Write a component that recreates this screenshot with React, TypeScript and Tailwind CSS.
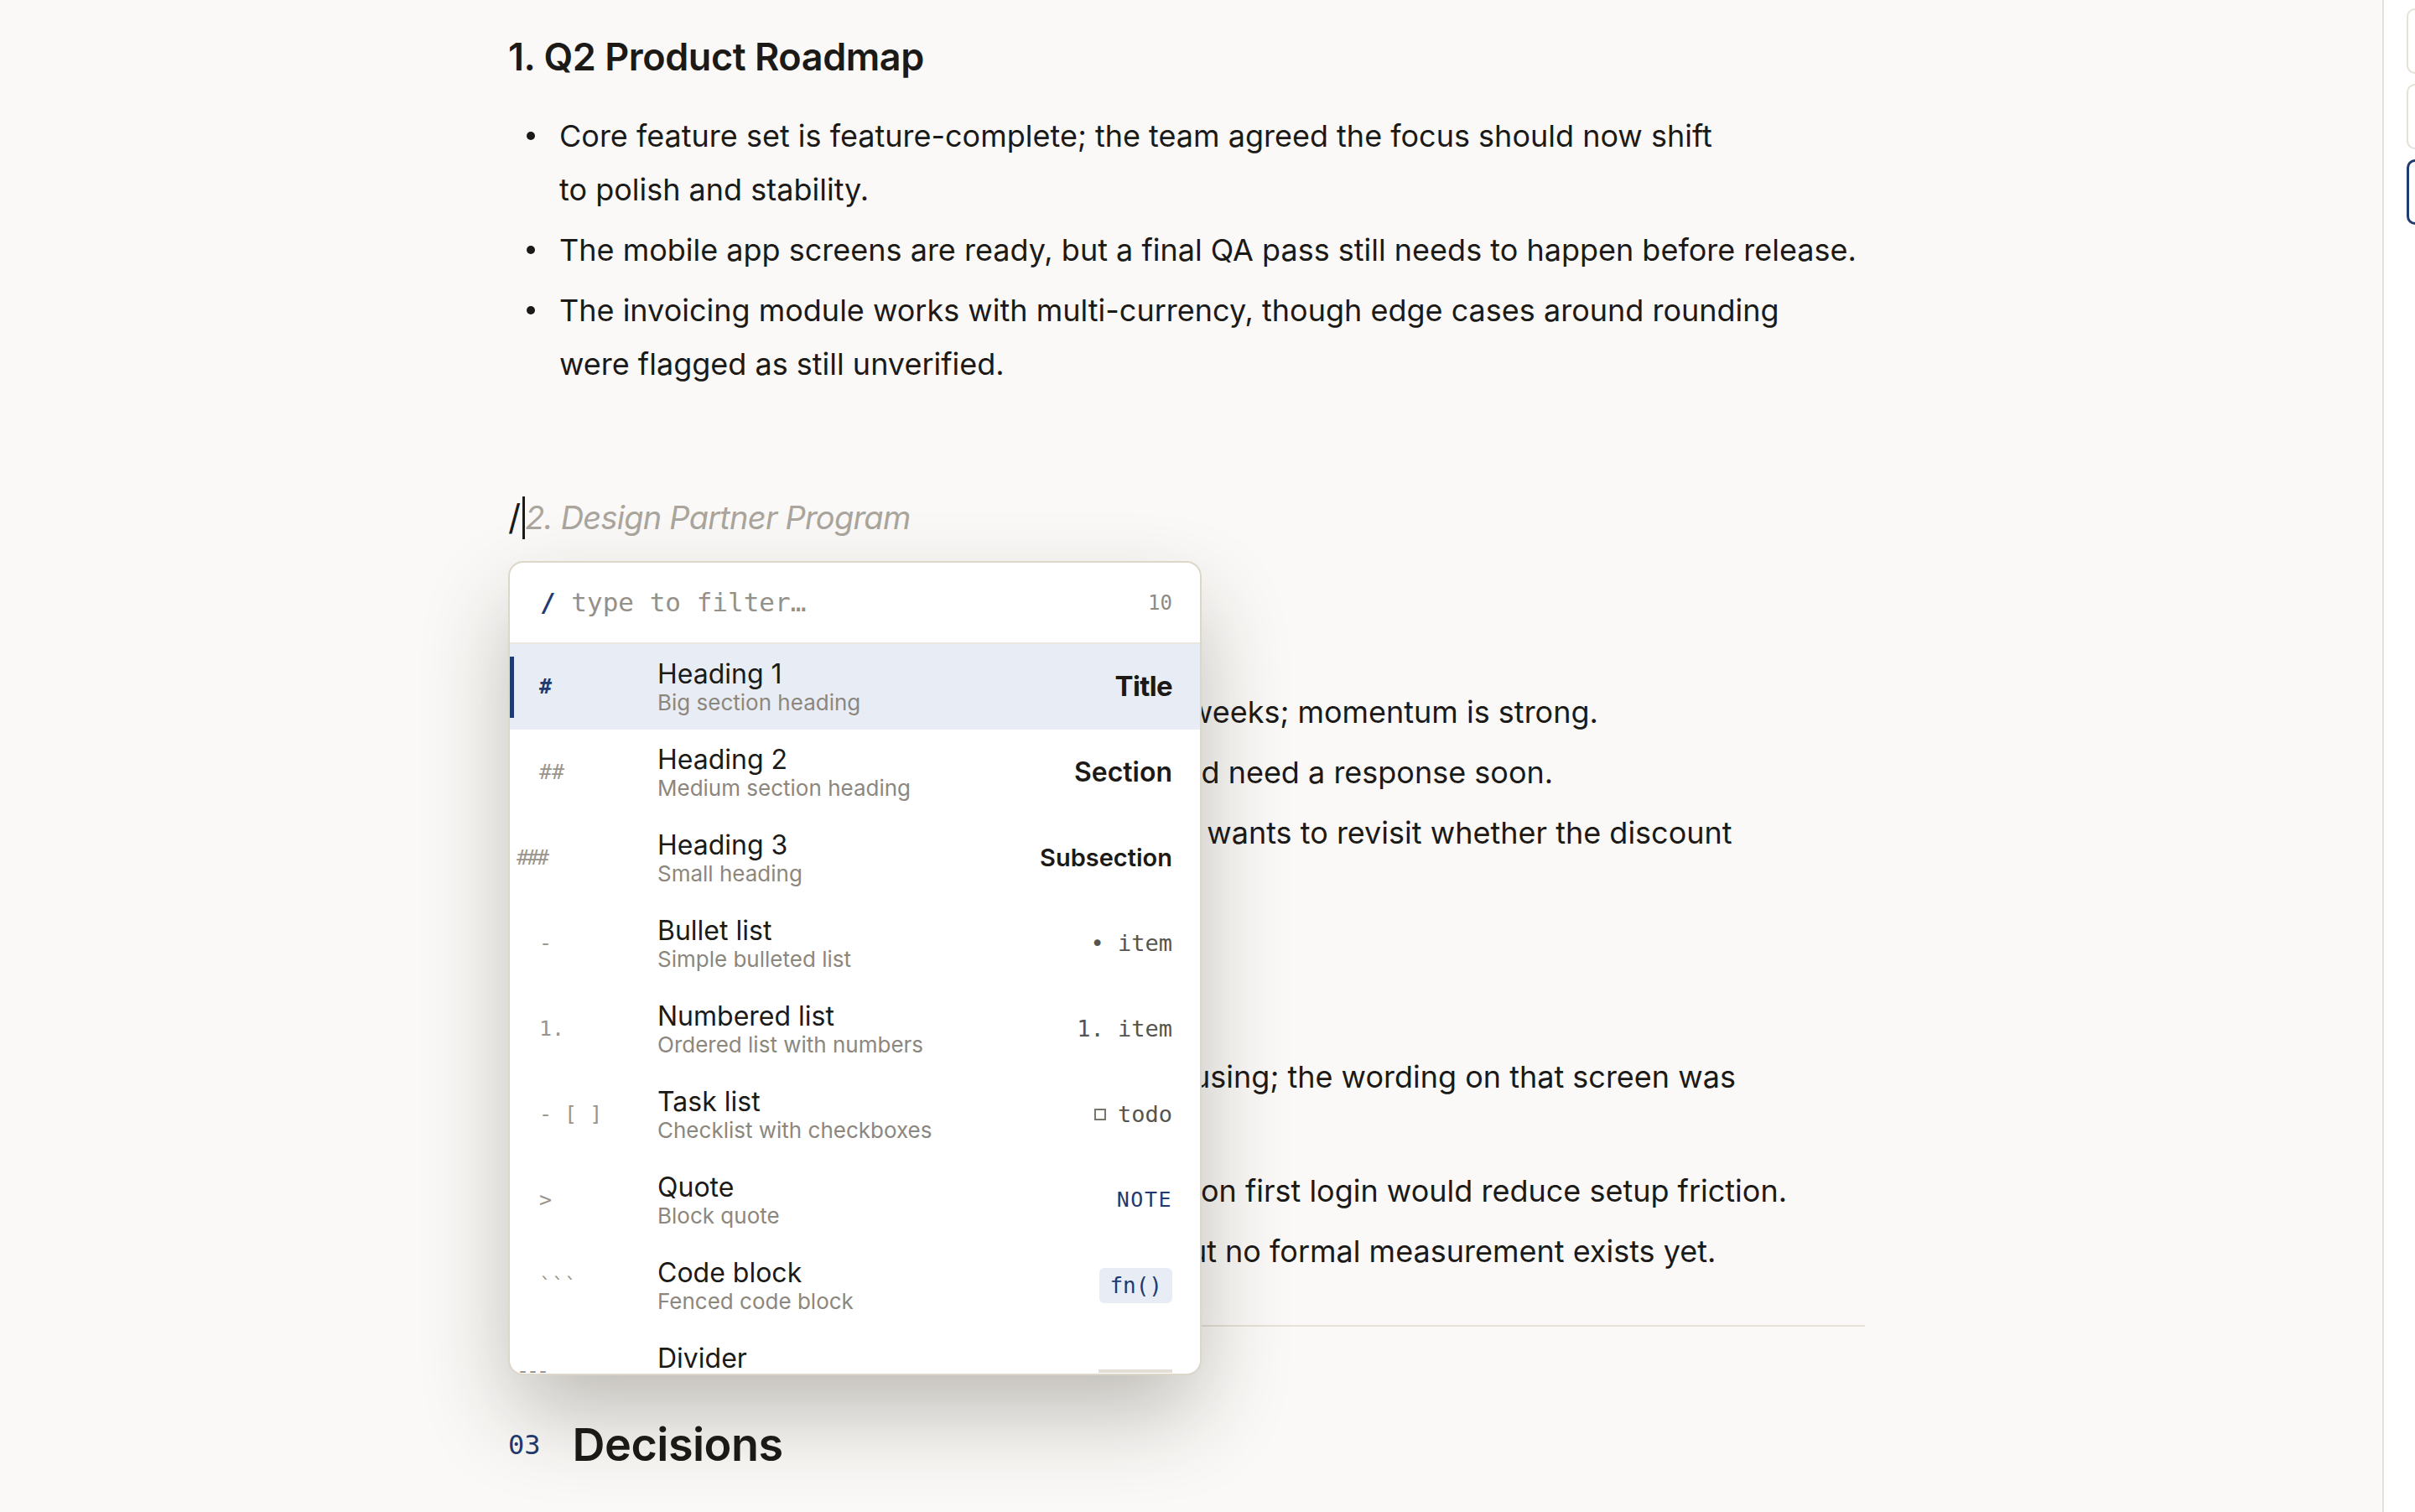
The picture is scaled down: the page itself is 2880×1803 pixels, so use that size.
import type { ReactNode } from 'react'

const mono = "font-['DejaVu_Sans_Mono','Liberation_Mono',monospace]"

type Command = {
  shortcut: string
  shortcutClass?: string
  title: string
  hint: string
  preview: ReactNode
}

const commands: Command[] = [
  {
    shortcut: '#',
    title: 'Heading 1',
    hint: 'Big section heading',
    preview: <span className="text-[33px] font-bold tracking-[-0.02em]">Title</span>,
  },
  {
    shortcut: '##',
    title: 'Heading 2',
    hint: 'Medium section heading',
    preview: <span className="text-[32px] font-semibold">Section</span>,
  },
  {
    shortcut: '###',
    shortcutClass: '-ml-[27px] text-[22px] tracking-[-3px]',
    title: 'Heading 3',
    hint: 'Small heading',
    preview: <span className="text-[29px] font-semibold">Subsection</span>,
  },
  {
    shortcut: '-',
    title: 'Bullet list',
    hint: 'Simple bulleted list',
    preview: <span className={`${mono} text-[27px] text-[#57534e]`}>• item</span>,
  },
  {
    shortcut: '1.',
    title: 'Numbered list',
    hint: 'Ordered list with numbers',
    preview: <span className={`${mono} text-[27px] text-[#57534e]`}>1. item</span>,
  },
  {
    shortcut: '- [ ]',
    title: 'Task list',
    hint: 'Checklist with checkboxes',
    preview: (
      <span className={`${mono} flex items-center gap-[14px] text-[27px] text-[#57534e]`}>
        <span className="h-[14px] w-[14px] border-2 border-[#7a756d]" />
        todo
      </span>
    ),
  },
  {
    shortcut: '>',
    title: 'Quote',
    hint: 'Block quote',
    preview: <span className={`${mono} text-[25px] tracking-[0.06em] text-[#1f3b70]`}>NOTE</span>,
  },
  {
    shortcut: '```',
    title: 'Code block',
    hint: 'Fenced code block',
    preview: (
      <span className={`${mono} inline-block rounded-[6px] bg-[#e8edf5] px-[12px] py-[5px] text-[26px] leading-[32px] text-[#1f3b70]`}>
        fn()
      </span>
    ),
  },
  {
    shortcut: '---',
    shortcutClass: '-ml-[27px] tracking-[-3px]',
    title: 'Divider',
    hint: 'Horizontal rule',
    preview: <span className="block h-[4px] w-[88px] bg-[#e4dfd4]" />,
  },
]

function Bullet({ children }: { children: ReactNode }) {
  return (
    <li className="flex">
      <span className="flex h-[64px] w-[61px] shrink-0 items-center pl-[22px]">
        <span className="h-[10px] w-[10px] rounded-full bg-[#1c1a17]" />
      </span>
      <span>{children}</span>
    </li>
  )
}

function SlashMenu() {
  return (
    <div className="absolute left-0 top-[78px] z-10 flex h-[971px] w-[827px] flex-col overflow-hidden rounded-[18px] border-2 border-[#ddd7ca] bg-white shadow-[0_48px_110px_-8px_rgba(40,32,20,0.3)]">
      <div className="flex h-[97px] shrink-0 items-center justify-between border-b-2 border-[#ebe7de] pl-[36px] pr-[33px]">
        <span className={`${mono} text-[31px] text-[#959088]`}>
          <span className="font-bold text-[#1f3b70]">/</span> type to filter…
        </span>
        <span className={`${mono} text-[24px] text-[#8f8a82]`}>10</span>
      </div>
      <ul className="flex-1 overflow-hidden">
        {commands.map((c, i) => {
          const active = i === 0
          return (
            <li
              key={c.title}
              className={`relative flex h-[102px] items-center pl-[35px] pr-[33px] ${active ? 'bg-[#e8edf5]' : ''}`}
            >
              {active && <span className="absolute bottom-[14px] left-0 top-[15px] w-[5px] bg-[#1f3b70]" />}
              <span className="w-[141px] shrink-0">
                <span
                  className={`${mono} text-[25px] ${active ? 'font-bold text-[#1f3b70]' : 'text-[#9a958c]'} ${c.shortcutClass ?? ''}`}
                >
                  {c.shortcut}
                </span>
              </span>
              <div className="flex min-w-0 flex-1 flex-col">
                <span className="text-[32px] leading-[38px]">{c.title}</span>
                <span className="text-[26px] leading-[30px] text-[#8c877e]">{c.hint}</span>
              </div>
              <div className="shrink-0">{c.preview}</div>
            </li>
          )
        })}
      </ul>
    </div>
  )
}

export default function App() {
  return (
    <div className="flex h-[1803px] w-full overflow-hidden bg-[#faf9f7] font-['Inter','Noto_Sans',sans-serif] text-[#1c1a17]">
      <main className="min-w-0 flex-1 overflow-hidden">
        <article className="ml-[606px] w-[1618px] pt-[42px]">
          <h3 className="text-[45px] font-semibold leading-[52px] tracking-[-0.01em]">1. Q2 Product Roadmap</h3>
          <ul className="mt-[36px] flex flex-col gap-[8px] text-[36px] leading-[64px]">
            <Bullet>
              Core feature set is feature-complete; the team agreed the focus should now shift
              <br />
              to polish and stability.
            </Bullet>
            <Bullet>The mobile app screens are ready, but a final QA pass still needs to happen before release.</Bullet>
            <Bullet>
              The invoicing module works with multi-currency, though edge cases around rounding
              <br />
              were flagged as still unverified.
            </Bullet>
          </ul>

          <div className="relative mt-[125px]">
            <div className="flex h-[52px] items-center text-[38px] leading-[52px]">
              <span className="text-[42px]">/</span>
              <span className="ml-[2px] h-[51px] w-[3px] bg-[#1c1a17]" />
              <span className="italic tracking-[-0.02em] text-[#aaa59d]">2. Design Partner Program</span>
            </div>
            <SlashMenu />
          </div>

          <ul className="mt-[102px] flex flex-col gap-[8px] text-[36px] leading-[64px]">
            <Bullet>Four design partners are now active.</Bullet>
            <Bullet>Partner sign-ups have risen for two straight weeks; momentum is strong.</Bullet>
            <Bullet>Two partners sent queries on the contract and need a response soon.</Bullet>
            <Bullet>
              Finance flagged the partner pricing level and wants to revisit whether the discount
              <br />
              tier still holds.
            </Bullet>
          </ul>
          <h4 className="mt-[60px] text-[36px] font-semibold leading-[52px]">Feedback</h4>
          <ul className="mt-[51px] flex flex-col gap-[8px] text-[36px] leading-[64px]">
            <Bullet>
              Several partners found the billing setup confusing; the wording on that screen was
              <br />
              too technical.
            </Bullet>
            <Bullet>Partners suggested a guided checklist given on first login would reduce setup friction.</Bullet>
            <Bullet>Retention looks healthy anecdotally so far, but no formal measurement exists yet.</Bullet>
          </ul>
          <hr className="mt-[56px] border-0 border-t-2 border-[#e6e1d6]" />
          <div className="mt-[109px] flex items-center gap-[38px]">
            <span className={`${mono} text-[32px] text-[#1f3b70]`}>03</span>
            <h2 className="text-[54px] font-semibold leading-[64px] tracking-[-0.01em]">Decisions</h2>
          </div>
        </article>
      </main>
      <aside className="flex w-[39px] shrink-0 flex-col gap-[12px] overflow-hidden border-l-2 border-[#e6e1d6] bg-white pl-[27px] pt-[10px]">
        <div className="h-[78px] w-[80px] shrink-0 rounded-[10px] border-2 border-[#e6e1d6]" />
        <div className="h-[78px] w-[80px] shrink-0 rounded-[10px] border-2 border-[#e6e1d6]" />
        <div className="h-[78px] w-[80px] shrink-0 rounded-[10px] border-[3px] border-[#1f3b70]" />
      </aside>
    </div>
  )
}
